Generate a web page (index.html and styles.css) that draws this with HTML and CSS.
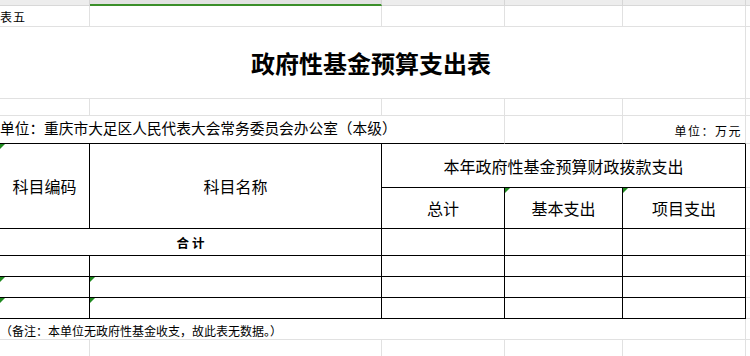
FILE: index.html
```html
<!DOCTYPE html>
<html lang="zh-CN">
<head>
<meta charset="utf-8">
<title>政府性基金预算支出表</title>
<link rel="stylesheet" href="styles.css">
</head>
<body>
<div class="sheet">
  <div class="strip">
    <div class="hc"></div><div class="hc active"></div><div class="hc"></div><div class="hc"></div><div class="hc"></div><div class="hc last"></div>
  </div>
  <div class="grid">
    <!-- row 1 -->
    <div class="c small label">表五</div><div class="c"></div><div class="c"></div><div class="c"></div><div class="c"></div><div class="c edge"></div>
    <!-- title -->
    <div class="c span5 title">政府性基金预算支出表</div><div class="c edge"></div>
    <!-- spacer row -->
    <div class="c"></div><div class="c"></div><div class="c"></div><div class="c"></div><div class="c"></div><div class="c edge"></div>
    <!-- unit row -->
    <div class="c span3 kb unit-left">单位：重庆市大足区人民代表大会常务委员会办公室（本级）</div><div class="c kb"></div><div class="c kb unit-right">单位：万元</div><div class="c edge"></div>
    <!-- header -->
    <div class="c k rows2 head tri">科目编码</div>
    <div class="c k rows2 head">科目名称</div>
    <div class="c k span3 head">本年政府性基金预算财政拨款支出</div>
    <div class="c edge"></div>
    <div class="c k head">总计</div>
    <div class="c k head tri">基本支出</div>
    <div class="c k head tri">项目支出</div>
    <div class="c edge"></div>
    <!-- total -->
    <div class="c k span2 total">合计</div><div class="c k"></div><div class="c k"></div><div class="c k"></div><div class="c edge"></div>
    <!-- data rows -->
    <div class="c k"></div><div class="c k"></div><div class="c k"></div><div class="c k"></div><div class="c k"></div><div class="c edge"></div>
    <div class="c k tri"></div><div class="c k tri"></div><div class="c k"></div><div class="c k"></div><div class="c k"></div><div class="c edge"></div>
    <div class="c k tri"></div><div class="c k tri"></div><div class="c k"></div><div class="c k"></div><div class="c k"></div><div class="c edge"></div>
    <!-- remark -->
    <div class="c span5 remark">（备注：本单位无政府性基金收支，故此表无数据。）</div><div class="c edge"></div>
    <!-- last row -->
    <div class="c"></div><div class="c"></div><div class="c"></div><div class="c"></div><div class="c"></div><div class="c edge"></div>
  </div>
</div>
</body>
</html>
```
FILE: styles.css
```css
html, body {
  margin: 0;
  padding: 0;
  background: #ffffff;
  overflow: hidden;
}

.sheet {
  width: 750px;
  height: 356px;
  overflow: hidden;
  font-family: "Noto Sans CJK SC", "Noto Sans", sans-serif;
  color: #000;
}

.strip {
  display: grid;
  grid-template-columns: 90px 292px 123px 118px 123px 4px;
  height: 6px;
}

.hc {
  box-sizing: border-box;
  background: #ededed;
  border-right: 1px solid #d6d6d6;
  border-bottom: 1px solid #d8d8d8;
}

.hc.active {
  background: #e2e2e2;
  border-bottom: 2px solid #3b8f2a;
}

.hc.last {
  border-right: none;
}

.grid {
  display: grid;
  grid-template-columns: 90px 292px 123px 118px 123px 4px;
  grid-template-rows: 21px 72px 17px 28px 44px 41px 27px 21px 21px 21px 21px 21px;
}

.c {
  box-sizing: border-box;
  position: relative;
  border-right: 1px solid #e1e1e1;
  border-bottom: 1px solid #e1e1e1;
  display: flex;
  align-items: center;
  justify-content: center;
  white-space: nowrap;
  min-width: 0;
}

.c.edge {
  border-right: none;
}

.c.k {
  border-right-color: #000;
  border-bottom-color: #000;
}

.c.kb {
  border-bottom-color: #000;
}

.span2 { grid-column: span 2; }
.span3 { grid-column: span 3; }
.span5 { grid-column: span 5; }
.rows2 { grid-row: span 2; }

.label {
  justify-content: flex-start;
  font-size: 12px;
  letter-spacing: 1px;
}

.title {
  font-size: 24px;
  font-weight: 700;
  padding-right: 3px;
}

.unit-left {
  justify-content: flex-start;
  font-size: 14.7px;
  padding-bottom: 5px;
  overflow: visible;
  z-index: 1;
}

.unit-right {
  justify-content: flex-end;
  font-size: 12px;
  letter-spacing: 1.5px;
  padding-right: 3px;
  padding-top: 1px;
}

.head {
  font-size: 16px;
}

.total {
  font-size: 12.5px;
  font-weight: 700;
  letter-spacing: 3px;
  padding-left: 3px;
}

.remark {
  justify-content: flex-start;
  font-size: 12px;
  padding-top: 3px;
}

.tri::before {
  content: "";
  position: absolute;
  left: 0;
  top: 0;
  width: 0;
  height: 0;
  border-top: 5px solid #1f8a1f;
  border-right: 5px solid transparent;
}
```
